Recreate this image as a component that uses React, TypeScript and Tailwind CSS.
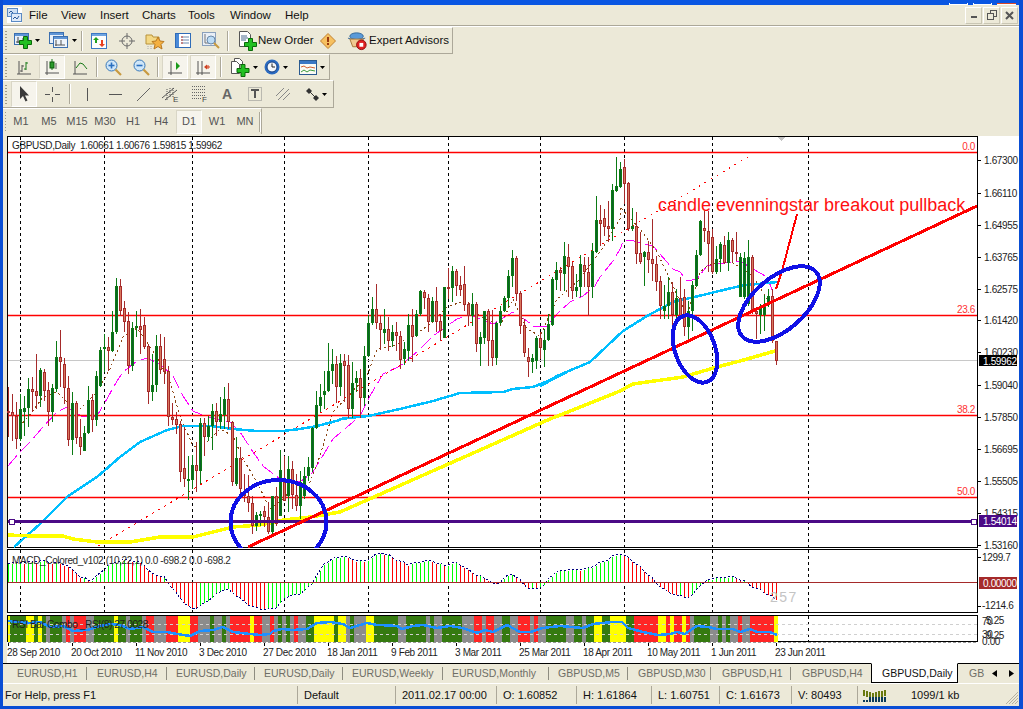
import React from "react";

type P = [number, number];
const z = (ox: number, oy: number, pts: number[][]): P[] => pts.map(([u, v]) => [ox + u / 3, oy + v / 3]);
const pl = (p: P[]) => p.map(([x, y]) => `${Math.round(x)},${Math.round(y)}`).join(" ");
const at = (p: P[], x: number) => {
  if (x <= p[0][0]) return p[0][1];
  for (let i = 1; i < p.length; i++) if (x <= p[i][0]) {
    const t = (x - p[i - 1][0]) / (p[i][0] - p[i - 1][0] || 1);
    return p[i - 1][1] + t * (p[i][1] - p[i - 1][1]);
  }
  return p[p.length - 1][1];
};

// kind(1 bull,0 bear), body top, body bottom, high, low  (in zoomed coordinates of each block)
const A = [[0,425,432,355,500],[0,430,442,375,515],[0,440,510,400,540],[1,420,510,375,515],[1,417,430,380,500],[1,360,418,327,475],[0,361,368,325,430],[0,367,380,255,420],[1,303,380,297,415],[0,310,365,300,395],[0,363,430,340,472],[1,358,430,345,460],[1,265,360,215,370],[0,265,280,183,355],[0,285,358,268,405],[0,358,512,320,530],[1,403,512,370,558],[0,403,507,395,525],[0,505,535,450,558],[1,493,545,470,545],[1,393,493,352,495],[0,393,452,375,490],[1,322,452,305,470],[1,243,350,235,355],[1,235,238,195,310],[0,235,245,205,305],[1,190,245,125,250],[1,52,190,28,195],[0,52,125,30,140],[0,118,158,97,190],[0,157,290,130,315],[1,178,290,158,305],[1,172,178,127,205],[0,172,182,120,255],[0,168,233,145,240],[0,232,370,225,405],[1,347,370,255,395],[1,232,347,198,370],[0,232,302,195,315],[0,270,308,203,345],[0,305,445,290,470],[0,445,452,402,468],[0,450,468,430,495],[0,465,610,455,640],[0,598,630,475,655],[1,630,632,560,692],[1,588,632,558,660],[0,588,605,520,670],[1,463,605,447,645],[0,462,503,447,560],[1,472,503,440,515],[1,427,472,405,542],[0,427,458,402,500],[1,436,458,383,480],[1,390,437,355,480],[0,390,460,343,480],[0,460,640,455,650],[1,568,645,505,650],[0,568,660,535,690],[0,667,682,615,700],[0,680,703,618,730],[0,703,770,680,795],[1,738,770,730,785],[1,735,740,725,770],[0,727,745,710,775],[0,745,790,700,795],[1,682,790,680,800],[0,682,765,655,770],[1,603,740,543,740],[0,640,695,560,695],[1,600,680,562,730],[0,600,678,575,720],[0,677,712,615,725],[1,640,712,605,750],[1,620,680,595,690],[1,595,620,565,635],[1,478,598,475,610],[1,408,478,367,480]];
const B = [[1,535,560,495,580],[1,515,527,457,570],[1,455,515,373,520],[1,435,455,390,495],[0,435,503,410,553],[1,433,503,405,530],[0,427,440,405,550],[0,438,570,408,598],[1,493,570,430,598],[1,477,493,455,520],[0,477,537,450,598],[1,412,537,380,560],[1,312,412,287,415],[1,270,312,235,317],[0,270,313,195,330],[0,313,332,290,392],[1,330,343,270,375],[0,330,367,293,395],[1,340,365,318,385],[0,340,350,308,395],[0,352,422,335,450],[1,390,420,368,437],[1,318,395,285,425],[0,318,355,270,430],[1,285,352,273,355],[1,215,285,212,290],[0,218,238,212,270],[0,237,308,225,340],[1,247,308,235,310],[0,247,310,205,340],[0,305,335,285,365],[1,205,358,205,358],[0,205,210,148,240],[1,155,208,140,248],[0,155,200,150,232],[0,198,212,170,232],[0,195,258,142,275],[0,255,290,248,320],[1,255,290,222,320],[0,255,375,248,400],[1,355,375,340,440],[1,277,358,275,375],[0,277,365,270,440],[0,363,417,273,440],[1,312,417,310,438],[1,277,312,262,318],[1,237,277,230,280],[1,172,237,153,265],[1,118,172,93,205],[0,118,225,112,245],[0,223,320,215,345],[0,318,402,300,415],[0,415,430,388,475],[1,417,430,405,463],[1,357,425,352,450],[0,357,388,340,420],[1,362,392,330,445],[1,315,362,285,365],[1,180,318,175,320],[1,153,183,128,212],[0,153,163,143,215],[1,112,165,70,215],[0,113,143,75,235],[0,140,215,130,240],[1,205,215,165,235],[1,135,205,107,235],[0,138,158,115,205],[0,158,203,115,290],[1,162,203,142,237]];
const C = [[1,307,375,283,380],[1,213,310,140,312],[0,213,225,168,290],[0,207,235,180,262],[0,230,240,155,278],[1,123,240,105,275],[1,112,127,25,130],[1,60,113,40,118],[0,55,105,30,165],[0,103,240,100,245],[1,232,240,178,245],[0,232,315,190,345],[0,312,340,250,345],[1,310,325,305,410],[0,310,332,275,372],[0,330,345,210,395],[0,345,398,320,425],[0,397,472,380,510],[1,472,487,408,510],[1,430,470,385,510],[0,430,498,400,550],[1,448,498,420,525],[0,448,505,385,505],[0,443,535,420,560],[1,485,535,455,582],[1,408,485,395,545],[1,317,410,302,415],[1,215,318,213,320],[0,238,247,185,280]];
const D = [[0,290,330,232,415],[0,310,415,285,420],[1,375,415,335,420],[1,330,375,325,415],[0,333,388,305,390],[1,318,388,295,410],[0,318,355,312,385],[0,355,358,295,380],[1,370,490,358,490],[1,372,490,355,495],[1,370,510,318,515],[0,370,532,363,540],[0,530,540,520,615],[1,517,543,510,600],[1,510,543,482,590],[1,485,510,465,520],[0,485,620,465,628],[0,622,680,622,692]];

const candles: { x: number; k: number; t: number; b: number; h: number; l: number }[] = [];
const add = (rows: number[][], start: number, base: number) => rows.forEach((r, i) => candles.push({
  x: start + 4 * i, k: r[0], t: Math.round(base + r[1] / 3), b: Math.round(base + r[2] / 3), h: Math.round(base + r[3] / 3), l: Math.round(base + r[4] / 3),
}));
add(A, 8, 270); add(B, 320, 220); add(C, 592, 150); add(D, 708, 135);

const cyan: P[] = [[14, 548], ...z(0, 270, [[120,765],[200,685],[290,625],[360,565],[420,520],[500,483],[550,470],[630,470],[700,480],[770,485],[850,485],[900,480],[950,470],[1020,452]]), ...z(300, 220, [[120,600],[205,590],[300,570],[400,545],[480,522],[610,520],[640,510],[700,505],[760,480],[800,460]]), ...z(540, 150, [[0,710],[50,680],[150,640],[200,590],[250,545],[320,500],[400,460],[500,435],[600,410]]), ...z(600, 135, [[440,452],[533,445]])];
const yellow: P[] = [...z(0, 270, [[24,797],[100,800],[190,800],[220,810],[290,820],[390,818],[480,805],[580,803],[640,790],[700,775],[780,768],[850,752],[930,745],[1020,730]]), ...z(300, 220, [[750,600],[850,560],[960,515]]), ...z(600, 135, [[100,750],[250,730],[350,700],[420,680],[525,652]])];
const magenta: P[] = [...z(0, 270, [[24,590],[60,550],[90,520],[130,475],[170,430],[200,415],[250,445],[290,440],[325,385],[350,335],[370,310],[410,275],[440,268],[480,285],[520,320],[550,380],[580,425],[620,445],[690,460],[720,490],[760,550],[790,590],[840,630],[900,640],[940,610],[1000,510]]), ...z(300, 220, [[180,590],[210,530],[250,465],[300,440],[355,395],[400,350],[440,320],[470,300],[510,288],[580,315],[640,278],[680,305],[700,322],[740,322],[770,285],[810,250],[850,230],[885,200],[900,175],[940,125],[960,90]]), ...z(540, 150, [[250,278],[270,272],[340,290],[400,360],[420,370],[440,395],[470,390],[500,350],[530,345],[600,335],[640,360],[680,385],[700,430],[708,420]])];
const brown: P[] = [...z(0, 270, [[24,505],[60,470],[95,430],[130,385],[170,370],[230,430],[290,370],[330,300],[370,205],[410,178],[470,265],[510,340],[540,440],[580,530],[610,530],[660,480],[700,500],[730,570],[770,640],[810,720],[850,690],[890,640],[930,640],[960,560],[1000,430]]), ...z(300, 220, [[200,470],[230,390],[280,380],[340,350],[400,310],[445,260],[500,245],[540,290],[600,320],[640,240],[680,330],[720,350],[770,240],[830,190],[900,100],[960,0]]), ...z(540, 150, [[240,175],[300,240],[350,310],[400,410],[440,500],[480,370],[500,350],[560,330],[640,380],[700,480]])];

const macdP: P[] = [...z(0, 480, [[24,255],[130,248],[200,260],[240,295],[265,305],[280,305],[290,295],[320,265],[350,250],[380,245],[430,255],[450,285],[490,295],[510,315],[540,355],[570,385],[590,385],[620,365],[660,335],[680,325],[700,340],[740,370],[770,385],[800,390],[830,380],[860,350],[900,340],[930,320],[950,290],[980,250],[1030,232],[1060,245],[1090,250]]), ...z(380, 550, [[0,15],[20,18],[60,40],[85,48],[130,38],[160,40],[190,52],[230,43],[250,55],[290,80],[330,97],[350,103],[370,92],[395,75],[420,95],[440,110],[470,120],[500,100],[530,70],[570,63],[610,65],[660,45],[720,15],[760,40],[800,75],[830,100],[860,125],[900,138],[930,145],[960,105],[990,90],[1050,85],[1100,100],[1150,125],[1190,150]])];
const macd = Array.from({ length: 193 }, (_, i) => {
  const x = 8 + 4 * i;
  return { x, y: Math.round(at(macdP, x) + Math.sin(i * 1.9) * 0.7) };
});

const rsi: P[] = [...z(0, 480, [[24,425],[60,430],[90,432],[120,430],[150,445],[190,440],[220,455],[260,453],[300,440],[330,435],[360,438],[390,450],[430,445],[460,458],[500,460],[530,465],[570,470],[600,455],[640,452],[670,445],[700,460],[750,465],[780,468],[810,465],[820,455],[845,450],[880,452],[920,450],[950,432],[990,428],[1030,435],[1050,448],[1100,433],[1130,437]]), ...z(380, 550, [[0,228],[50,232],[65,240],[100,230],[130,228],[170,238],[210,230],[250,238],[290,252],[315,242],[340,250],[380,228],[420,248],[450,250],[490,238],[540,230],[610,238],[640,225],[700,218],[725,218],[745,238],[790,248],[835,258],[870,255],[890,248],[915,255],[950,230],[985,235],[1010,240],[1060,240],[1080,248],[1110,240],[1130,250],[1170,248],[1190,258]])];

const G = "#357a10", Y = "#ffff00", R = "#ff2626", S = "#8c8c8c";
const bandsA: [number, number, string][] = [[24,30,Y],[30,78,G],[78,102,Y],[102,114,G],[114,126,Y],[126,138,G],[138,150,S],[150,186,G],[186,198,S],[198,210,R],[210,222,S],[222,258,R],[258,282,S],[282,342,G],[342,354,Y],[354,378,G],[378,390,S],[390,426,G],[426,438,S],[438,462,R],[462,498,S],[498,534,R],[534,570,Y],[570,594,R],[594,630,S],[630,642,G],[642,666,S],[666,678,G],[678,690,S],[690,750,R],[750,762,Y],[762,786,R],[786,810,S],[810,822,R],[822,834,S],[834,846,G],[846,858,S],[858,870,G],[870,882,S],[882,894,R],[894,918,S],[918,942,G],[942,1002,Y],[1002,1014,G],[1014,1038,Y],[1038,1050,S],[1050,1062,G],[1062,1098,S],[1098,1122,Y],[1122,1140,G]];
const bandsB: [number, number, string][] = [[0,54,G],[54,78,S],[78,138,G],[138,150,S],[150,162,G],[162,186,S],[186,246,G],[246,282,S],[282,306,R],[306,318,S],[318,342,R],[342,366,S],[366,390,G],[390,414,S],[414,450,R],[450,462,S],[462,474,R],[474,498,S],[498,558,G],[558,582,S],[582,606,G],[606,618,S],[618,642,G],[642,666,Y],[666,690,G],[690,738,Y],[738,762,G],[762,834,R],[834,858,Y],[858,870,R],[870,882,Y],[882,906,R],[906,918,Y],[918,930,R],[930,942,S],[942,990,G],[990,1014,S],[1014,1026,G],[1026,1038,S],[1038,1050,G],[1050,1074,S],[1074,1086,R],[1086,1110,S],[1110,1182,R],[1182,1194,Y]];

const grid = [20, 104, 192, 284, 368, 448, 540, 624, 712, 808];
const axis: [string, number][] = [["1.67300",161],["1.66110",194],["1.64955",226],["1.63765",258],["1.62575",290],["1.61420",321],["1.60230",353],["1.59040",386],["1.57850",418],["1.56695",450],["1.55505",482],["1.54315",514],["1.53160",546]];
const fibs: [string, number][] = [["0.0",153],["23.6",316],["38.2",416],["50.0",498]];
const dates: [string, number][] = [["28 Sep 2010",7],["20 Oct 2010",71],["11 Nov 2010",135],["3 Dec 2010",199],["27 Dec 2010",263],["18 Jan 2011",327],["9 Feb 2011",391],["3 Mar 2011",455],["25 Mar 2011",519],["18 Apr 2011",583],["10 May 2011",647],["1 Jun 2011",711],["23 Jun 2011",775]];
const TXT = "#1c1c1c";
const CH = "text-[10px] tracking-[-0.35px]";

function Grid({ y1, y2 }: { y1: number; y2: number }) {
  return <>{grid.map((x) => <line key={x} x1={x + 0.5} x2={x + 0.5} y1={y1} y2={y2} stroke="#000" strokeDasharray="3 3" />)}</>;
}

function MainPane() {
  return (
    <svg viewBox="7 137 1012 412" width={1012} height={412} className="block overflow-visible relative z-10" shapeRendering="crispEdges">
      <defs><clipPath id="paneClip"><rect x="7" y="137" width="971" height="412" /></clipPath></defs>
      <rect x="7.5" y="137.5" width="970" height="411" fill="#fff" stroke="#000" />
      <Grid y1={138} y2={548} />
      <line x1="8" x2="977" y1="361.5" y2="361.5" stroke="#c8c8c8" />
      <polyline points={pl(magenta)} fill="none" stroke="#ff00ff" strokeDasharray="14 5" />
      <polyline points={pl(brown)} fill="none" stroke="#8b4513" strokeDasharray="2 3" />
      <line x1="98" y1="547" x2="753" y2="155" stroke="#ff0000" strokeDasharray="2 5" />
      {fibs.map(([t, y]) => <line key={t} x1="8" x2="977" y1={y + 0.5} y2={y + 0.5} stroke="#ff0000" strokeWidth="1.4" shapeRendering="auto" />)}
      <polyline points={pl(cyan)} fill="none" stroke="#00bfff" strokeWidth="2.5" />
      <polyline points={pl(yellow)} fill="none" stroke="#ffff00" strokeWidth="3.5" />
      {candles.map((c) => {
        const line = c.k ? "#0b7a14" : "#a52a2a";
        const fill = c.k ? "#0a6128" : "#d9785f";
        return (
          <g key={c.x}>
            <rect x={c.x} y={c.h} width="1" height={Math.max(c.l - c.h, 1)} fill={line} />
            <rect x={c.x - 1} y={c.t} width="3" height={Math.max(c.b - c.t, 2)} fill={line} />
            {c.b - c.t > 2 && <rect x={c.x} y={c.t + 1} width="1" height={c.b - c.t - 2} fill={fill} />}
          </g>
        );
      })}
      <rect x="8" y="521" width="969" height="3" fill="#4b0a86" />
      <rect x="9" y="520" width="5" height="5" fill="#fff" stroke="#4b0a86" />
      <rect x="971" y="520" width="5" height="5" fill="#fff" stroke="#4b0a86" />
      <g clipPath="url(#paneClip)">
        <line x1="248" y1="548" x2="977" y2="207" stroke="#ff0000" strokeWidth="3" />
        <polyline points="776,290 782,272 797,215" fill="none" stroke="#ff0000" strokeWidth="2" />
        <ellipse cx="278.5" cy="523" rx="48" ry="42" fill="none" stroke="#1010e6" strokeWidth="4" />
        <ellipse cx="695" cy="350" rx="20" ry="35" transform="rotate(-20 695 350)" fill="none" stroke="#1010e6" strokeWidth="4" />
        <ellipse cx="779" cy="305" rx="49" ry="26" transform="rotate(-41 779 305)" fill="none" stroke="#1010e6" strokeWidth="4" />
      </g>
      <polygon points="778,138 785,138 781.5,142" fill="#c4c4c4" />
      {fibs.map(([t, y]) => <text key={t} x="975" y={y - 2} textAnchor="end" fill="#ff3030" className={CH}>{t}</text>)}
      <text x="12" y="150" fill={TXT} className={CH} xmlSpace="preserve">GBPUSD,Daily  1.60661 1.60676 1.59815 1.59962</text>
      <text x="658" y="212" fill="#ff1010" className="text-[18px]">candle evenningstar breakout pullback</text>
      {axis.map(([t, y]) => (
        <g key={t}>
          <line x1="977" x2="981" y1={y + 0.5} y2={y + 0.5} stroke="#000" />
          <text x="984" y={y + 4} fill={TXT} className={CH}>{t}</text>
        </g>
      ))}
      <rect x="979" y="356" width="38" height="11" fill="#000" />
      <text x="983" y="365.5" fill="#fff" className={CH}>1.59962</text>
      <rect x="979" y="516" width="38" height="12" fill="#4b0a86" />
      <text x="983" y="526" fill="#fff" className={CH}>1.54014</text>
    </svg>
  );
}

function MacdPane() {
  const tops = macd.map((b): P => [b.x, b.y + (b.y < 583 ? -1 : 1)]);
  return (
    <svg viewBox="7 549 1012 66" width={1012} height={66} className="block" shapeRendering="crispEdges">
      <rect x="7.5" y="550.5" width="970" height="63" fill="#fff" stroke="#000" />
      <Grid y1={551} y2={613} />
      {macd.map((b, i) => {
        const prev = i ? macd[i - 1].y : b.y + 1;
        const up = b.y <= prev;
        return <rect key={b.x} x={b.x} y={Math.min(b.y, 583)} width="1" height={Math.abs(b.y - 583) + 1} fill={up ? "#00ff00" : "#ff0000"} />;
      })}
      <polyline points={pl(tops)} fill="none" stroke="#000080" strokeDasharray="2 2" />
      <line x1="8" x2="977" y1="583.5" y2="583.5" stroke="#a52a2a" />
      <text x="12" y="565" fill="#2a2a2a" className={CH}>MACD_Colored_v102 (10,22,1) 0.0 -698.2 0.0 -698.2</text>
      <text x="770" y="603" fill="#c4c4c4" letterSpacing="1.5" className="text-[14px]">257</text>
      <line x1="977" x2="981" y1="558.5" y2="558.5" stroke="#000" />
      <text x="982" y="562" fill={TXT} className={CH}>1299.7</text>
      <text x="982" y="610" fill={TXT} className={CH}>-1214.6</text>
      <line x1="977" x2="981" y1="607.5" y2="607.5" stroke="#000" />
      <rect x="979" y="578" width="38" height="12" fill="#a52a2a" />
      <text x="983" y="587.5" fill="#fff" className={CH}>0.00000</text>
    </svg>
  );
}

function RsiPane() {
  const seg = (a: [number, number, string][], ox: number) => a.map(([u, v, c]) => (
    <rect key={`${ox}-${u}`} x={ox + u / 3} y="617" width={(v - u) / 3} height="26" fill={c} />
  ));
  return (
    <svg viewBox="7 615 1012 29" width={1012} height={29} className="block overflow-visible relative z-10" shapeRendering="crispEdges">
      <rect x="7.5" y="616.5" width="970" height="26" fill="#fff" stroke="#000" />
      <Grid y1={617} y2={642} />
      {seg(bandsA, 0)}
      {seg(bandsB, 380)}
      <line x1="8" x2="977" y1="625.5" y2="625.5" stroke="#cfcfcf" strokeDasharray="3 3" />
      <line x1="8" x2="977" y1="635.5" y2="635.5" stroke="#cfcfcf" strokeDasharray="3 3" />
      <line x1="8" x2="977" y1="643.5" y2="643.5" stroke="#9a9a9a" strokeDasharray="3 2" />
      <polyline points={pl(rsi)} fill="none" stroke="#1e90ff" strokeWidth="2.5" />
      <text x="12" y="629" fill="#1e1e1e" className={CH}>RSI Bar Combo _RSI(8) 27.0028</text>
      <text x="982" y="626" fill={TXT} className={CH}>70</text>
      <text x="986" y="625" fill={TXT} className={CH}>5.25</text>
      <text x="982" y="639" fill={TXT} className={CH}>30</text>
      <text x="986" y="640" fill={TXT} className={CH}>9.25</text>
      <text x="982" y="646" fill={TXT} className={CH}>0.00</text>
    </svg>
  );
}

function DateAxis() {
  return (
    <svg viewBox="7 644 1012 20" width={1012} height={20} className="block" shapeRendering="crispEdges">
      {dates.map(([t, x]) => (
        <g key={t}>
          <line x1={x + 1.5} x2={x + 1.5} y1="644" y2="647" stroke="#000" />
          <text x={x} y="657" fill={TXT} className={CH}>{t}</text>
        </g>
      ))}
    </svg>
  );
}

/* ---------- toolbar icons ---------- */
const Caret = () => <svg width="5" height="3" viewBox="0 0 5 3" className="ml-[3px]"><polygon points="0,0 5,0 2.5,3" fill="#000" /></svg>;
const Plus = ({ x, y }: { x: number; y: number }) => (
  <path transform={`translate(${x} ${y})`} d="M4 0h4v4h4v4H8v4H4V8H0V4h4z" fill="#22c022" stroke="#0a6a0a" strokeWidth="1" />
);
const IconNewChart = () => (
  <svg width="18" height="16" viewBox="0 0 18 16"><rect x=".5" y=".5" width="14" height="11" fill="#e8f0fa" stroke="#3b6fb0" /><rect x="1" y="1" width="13" height="2" fill="#5f95d6" /><path d="M4 4v6m-2-1h9M9 5v5" stroke="#444" fill="none" /><Plus x={5.5} y={3.5} /></svg>
);
const IconProfiles = () => (
  <svg width="20" height="17" viewBox="0 0 20 17"><rect x=".5" y=".5" width="14" height="11" fill="#e8f0fa" stroke="#3b6fb0" /><rect x="1" y="1" width="13" height="2" fill="#5f95d6" /><rect x="4.5" y="4.5" width="14" height="11" fill="#eef4fb" stroke="#3b6fb0" /><rect x="5" y="5" width="13" height="2" fill="#5f95d6" /><path d="M7 8v6m-1-1h10m-4-5v5" stroke="#555" fill="none" /></svg>
);
const IconMarket = () => (
  <svg width="16" height="16" viewBox="0 0 16 16"><rect x=".5" y=".5" width="15" height="15" fill="#fdfdfd" stroke="#3b78c4" /><rect x="1" y="1" width="14" height="2" fill="#6fa4e0" /><path d="M5 4l3 3H6v3H4V7H2z" fill="#1fa01f" /><path d="M11 14l-3-3h2V7h2v4h2z" fill="#e84020" /></svg>
);
const IconCross = () => (
  <svg width="16" height="16" viewBox="0 0 16 16" fill="none" stroke="#6a6a6a"><circle cx="8" cy="8" r="5" /><path d="M8 0v6M8 10v6M0 8h6M10 8h6" /></svg>
);
const IconNavigator = () => (
  <svg width="20" height="18" viewBox="0 0 20 18"><path d="M1 3h6l1 2h6v7H1z" fill="#f4d884" stroke="#b8923a" /><polygon points="13,5 15,9 19,9.5 16,12.5 17,17 13,14.5 9,17 10,12.5 7,9.5 11,9" fill="#f4b040" stroke="#b87820" /><path d="M3 14v3M6 14v3" stroke="#aaa" strokeDasharray="1 1" /></svg>
);
const IconTerminal = () => (
  <svg width="16" height="15" viewBox="0 0 16 15"><rect x=".5" y=".5" width="15" height="14" fill="#fff" stroke="#2f6cb8" /><rect x="1" y="1" width="3" height="13" fill="#4a8ad8" /><path d="M6 4h8M6 7h8M6 10h8" stroke="#6a8ab0" /><path d="M6 4h2M6 7h2M6 10h2" stroke="#d04030" /></svg>
);
const IconTester = () => (
  <svg width="18" height="18" viewBox="0 0 18 18"><rect x=".5" y=".5" width="13" height="13" fill="#e8eef6" stroke="#8aa0bc" /><path d="M3 2v9h8" stroke="#777" fill="none" /><circle cx="9" cy="8" r="4" fill="#bcdcf6" stroke="#6a88a8" /><path d="M12 11l5 5" stroke="#c89a40" strokeWidth="2" /></svg>
);
const IconOrder = () => (
  <svg width="19" height="20" viewBox="0 0 19 20"><path d="M1.5.5h8l3 3v12h-11z" fill="#fff" stroke="#555" /><path d="M3 5h6M3 7h7M3 9h5" stroke="#4a6a90" /><Plus x={6.5} y={7.5} /></svg>
);
const IconAlert = () => (
  <svg width="16" height="16" viewBox="0 0 16 16"><polygon points="8,.5 15.5,8 8,15.5 .5,8" fill="#f6c060" stroke="#c08030" /><rect x="7" y="4" width="2" height="5" fill="#9a3a10" /><rect x="7" y="10" width="2" height="2" fill="#9a3a10" /></svg>
);
const IconExpert = () => (
  <svg width="21" height="20" viewBox="0 0 21 20"><ellipse cx="10" cy="5" rx="7" ry="3.5" fill="#5a9ad8" stroke="#386a9a" /><path d="M1 7c4 2 14 2 18 0" stroke="#386a9a" fill="none" /><path d="M3 8h14l-2 8H6z" fill="#f0c890" stroke="#a87838" /><circle cx="15" cy="14" r="5" fill="#e02020" stroke="#901010" /><rect x="13" y="12" width="4" height="4" fill="#fff" /></svg>
);
const IconBars = () => (
  <svg width="16" height="15" viewBox="0 0 16 15" fill="none"><path d="M1 14h14M3 1v13" stroke="#555" /><path d="M6 12V5M4 11h2M6 6h2" stroke="#555" /><path d="M10 10V2M10 9H8M10 3h2" stroke="#1a7a1a" /></svg>
);
const IconCandles = () => (
  <svg width="16" height="17" viewBox="0 0 16 17" fill="none"><path d="M1 14h14M3 2v14" stroke="#555" /><path d="M8 0v11" stroke="#1a7a1a" /><rect x="6" y="3" width="4" height="6" fill="#2a9a2a" stroke="#0a5a0a" /><path d="M12 4v6" stroke="#555" /></svg>
);
const IconLine = () => (
  <svg width="16" height="15" viewBox="0 0 16 15" fill="none"><path d="M1 14h14M3 1v13" stroke="#555" /><path d="M4 8l4-5 3 1 4 5" stroke="#1a7a1a" /></svg>
);
const IconZoom = ({ minus }: { minus?: boolean }) => (
  <svg width="17" height="17" viewBox="0 0 17 17" fill="none"><circle cx="6.5" cy="6.5" r="5.5" fill="#cfe6f8" stroke="#3878b8" /><path d="M3.5 6.5h6" stroke="#2a70c0" strokeWidth="1.6" />{!minus && <path d="M6.5 3.5v6" stroke="#2a70c0" strokeWidth="1.6" />}<path d="M10.5 10.5l5.5 5.5" stroke="#c89a40" strokeWidth="2.2" /></svg>
);
const IconShift = () => (
  <svg width="15" height="15" viewBox="0 0 15 15" fill="none"><path d="M0 13h14M3 1v14" stroke="#555" /><polygon points="8,2 12,6 8,10" fill="#1a9a1a" /></svg>
);
const IconScroll = () => (
  <svg width="15" height="15" viewBox="0 0 15 15" fill="none"><path d="M0 13h14M2 1v14M6 1v14" stroke="#555" /><path d="M10 7h4M12 5v4" stroke="#d04020" /><polygon points="8,7 11,4.5 11,9.5" fill="#d04020" /></svg>
);
const IconIndicators = () => (
  <svg width="20" height="19" viewBox="0 0 20 19"><path d="M4.5 .5h5l3 3v3h-8z" fill="#fff" stroke="#555" /><path d="M1.5 3.5h5l3 3v9h-8z" fill="#fff" stroke="#555" /><Plus x={7} y={6.5} /></svg>
);
const IconClock = () => (
  <svg width="16" height="16" viewBox="0 0 16 16"><circle cx="8" cy="8" r="7.5" fill="#2a6ac0" /><circle cx="8" cy="8" r="5" fill="#f4f8fc" stroke="#143e80" /><path d="M8 4.5V8h3" stroke="#222" fill="none" /></svg>
);
const IconTemplate = () => (
  <svg width="18" height="15" viewBox="0 0 18 15" fill="none"><rect x=".5" y=".5" width="17" height="14" fill="#fbfbf4" stroke="#2a5a90" /><rect x="1" y="1" width="16" height="3" fill="#3a78c4" /><path d="M2 7l3-1 3 2 3-1 5 1" stroke="#d06030" /><path d="M2 12l3-2 3 2 3-2 5 1" stroke="#3a9a3a" /></svg>
);
const IconArrow = () => (
  <svg width="11" height="16" viewBox="0 0 11 16"><polygon points="1,0 1,13 4,10 6.5,15.5 8.5,14.5 6,9.5 10,9.5" fill="#3a3a3a" /></svg>
);
const IconCrosshair = () => (
  <svg width="15" height="15" viewBox="0 0 15 15" stroke="#555" fill="none"><path d="M7.5 0v5M7.5 10v5M0 7.5h5M10 7.5h5" /></svg>
);
const IconV = () => <svg width="3" height="13" viewBox="0 0 3 13"><path d="M1.5 0v13" stroke="#555" /></svg>;
const IconH = () => <svg width="13" height="3" viewBox="0 0 13 3"><path d="M0 1.5h13" stroke="#555" /></svg>;
const IconT = () => <svg width="13" height="13" viewBox="0 0 13 13"><path d="M0 13L13 0" stroke="#666" fill="none" /></svg>;
const IconE = () => (
  <svg width="18" height="16" viewBox="0 0 18 16" fill="none" stroke="#555"><path d="M0 12L12 2M3 14L15 4" /><path d="M5 3v11M8 2v10M11 2v9" strokeDasharray="1 1" /><text x="11" y="15.5" stroke="none" fill="#444" className="text-[8px]">E</text></svg>
);
const IconF = () => (
  <svg width="16" height="16" viewBox="0 0 16 16" fill="none" stroke="#666"><path d="M1 .5h13M1 3.5h13M1 6.5h13M1 9.5h13M1 12.5h9" strokeDasharray="1 1" /><text x="11" y="15.5" stroke="none" fill="#444" className="text-[8px]">F</text></svg>
);
const IconTBox = () => (
  <svg width="14" height="14" viewBox="0 0 14 14" fill="none"><rect x=".5" y=".5" width="13" height="13" stroke="#888" strokeDasharray="1 1" /><path d="M3 3h8M7 3v8" stroke="#555" strokeWidth="2" /></svg>
);
const IconLines = () => (
  <svg width="14" height="13" viewBox="0 0 14 13" fill="none" stroke="#888"><path d="M0 8L8 0M2 12L13 1M7 12L14 5" /></svg>
);
const IconArrows = () => (
  <svg width="13" height="13" viewBox="0 0 13 13" fill="#333"><polygon points="3,0 6,3 3,6 0,3" /><polygon points="10,7 13,10 10,13 7,10" /><path d="M3 3l7 7" stroke="#333" /></svg>
);

const Grip = () => <div className="ml-[2px] w-[2px] h-[19px] bg-[repeating-linear-gradient(#a09c88_0_1px,transparent_1px_3px)]" />;
const Sep = ({ c }: { c: string }) => <div className={`flex justify-center ${c}`}><div className="w-[1px] h-[20px] bg-[#aca899] border-r border-white box-content" /></div>;
const Cell = ({ c, pressed, children }: { c: string; pressed?: boolean; children?: React.ReactNode }) => (
  <div className={`flex items-center shrink-0 ${c}`}>
    {pressed ? <div className="flex items-center justify-center w-full h-full bg-[#f6f4ec] border border-[#d9d6c6] border-b-white border-r-white">{children}</div> : children}
  </div>
);

function Toolbars() {
  const rowCls = "flex items-center border-r border-b border-[#aca899] border-t border-t-white bg-[#ece9d8]";
  const btn = "w-[28px] h-[24px] justify-center";
  return (
    <div className="flex flex-col text-[11px] text-[#111]">
      <div className={`${rowCls} w-[450px] h-[27px] text-[11.5px]`}>
        <Grip />
        <Cell c="w-[37px] pl-[7px]"><IconNewChart /><Caret /></Cell>
        <Cell c="w-[34px] pl-[5px]"><IconProfiles /><Caret /></Cell>
        <Sep c="w-[7px]" />
        <Cell c={btn}><IconMarket /></Cell>
        <Cell c={btn}><IconCross /></Cell>
        <Cell c={btn}><IconNavigator /></Cell>
        <Cell c={btn}><IconTerminal /></Cell>
        <Cell c={btn}><IconTester /></Cell>
        <Sep c="w-[6px]" />
        <Cell c="w-[84px] pl-[7px] gap-[1px] whitespace-nowrap"><IconOrder /><span>New Order</span></Cell>
        <Cell c="w-[26px] justify-center"><IconAlert /></Cell>
        <Cell c="w-[108px] pl-[6px] gap-[2px] whitespace-nowrap"><IconExpert /><span>Expert Advisors</span></Cell>
      </div>
      <div className={`${rowCls} w-[327px] h-[26px]`}>
        <Grip />
        <div className="w-[3px]" />
        <Cell c={btn}><IconBars /></Cell>
        <Cell c="w-[28px] h-[24px] px-[1px]" pressed><IconCandles /></Cell>
        <Cell c={btn}><IconLine /></Cell>
        <Sep c="w-[5px]" />
        <Cell c={btn}><IconZoom /></Cell>
        <Cell c={btn}><IconZoom minus /></Cell>
        <Sep c="w-[6px]" />
        <Cell c="w-[28px] h-[24px] px-[1px]" pressed><IconShift /></Cell>
        <Cell c="w-[28px] h-[24px] px-[1px]" pressed><IconScroll /></Cell>
        <Sep c="w-[8px]" />
        <Cell c="w-[33px] pl-[5px]"><IconIndicators /><Caret /></Cell>
        <Cell c="w-[34px] pl-[6px]"><IconClock /><Caret /></Cell>
        <Cell c="w-[34px] pl-[7px]"><IconTemplate /><Caret /></Cell>
      </div>
      <div className={`${rowCls} w-[331px] h-[28px]`}>
        <Grip />
        <div className="w-[3px]" />
        <Cell c="w-[28px] h-[26px] px-[1px]" pressed><IconArrow /></Cell>
        <Cell c={btn}><IconCrosshair /></Cell>
        <Sep c="w-[7px]" />
        <Cell c={btn}><IconV /></Cell>
        <Cell c={btn}><IconH /></Cell>
        <Cell c={btn}><IconT /></Cell>
        <Cell c={btn}><IconE /></Cell>
        <Cell c={btn}><IconF /></Cell>
        <Cell c={btn}><span className="text-[14px] font-bold text-[#666]">A</span></Cell>
        <Cell c={btn}><IconTBox /></Cell>
        <Cell c={btn}><IconLines /></Cell>
        <Cell c="w-[34px] pl-[9px]"><IconArrows /><Caret /></Cell>
      </div>
      <div className={`${rowCls} w-[259px] h-[26px] border-b-0 text-[#555]`}>
        <Grip />
        <div className="w-[2px]" />
        {["M1", "M5", "M15", "M30", "H1", "H4"].map((t) => <Cell key={t} c={btn}>{t}</Cell>)}
        <Cell c="w-[28px] h-[24px] px-[1px]" pressed>D1</Cell>
        {["W1", "MN"].map((t) => <Cell key={t} c={btn}>{t}</Cell>)}
        <Sep c="w-[2px]" />
      </div>
    </div>
  );
}

function MenuBar() {
  const items: [string, string][] = [["File", "w-[32px]"], ["View", "w-[39px]"], ["Insert", "w-[42px]"], ["Charts", "w-[46px]"], ["Tools", "w-[42px]"], ["Window", "w-[55px]"], ["Help", "w-[40px]"]];
  return (
    <div className="flex items-center h-[20px] text-[11.5px] text-[#111] border-b border-[#aca899] box-content">
      <div className="ml-[4px] mr-[7px] w-[15px] h-[16px] flex items-center justify-center bg-white">
        <svg width="15" height="15" viewBox="0 0 15 15"><rect x=".5" y=".5" width="10" height="8" fill="#cfe0f4" stroke="#5a8ac4" /><rect x="4.5" y="5.5" width="10" height="8" fill="#dfeaf8" stroke="#5a8ac4" /><path d="M6 11l2-2 2 2 2-3" stroke="#2a5a9a" fill="none" /><path d="M2 5l2-2 2 2" stroke="#2a5a9a" fill="none" /></svg>
      </div>
      {items.map(([t, w]) => <span key={t} className={`${w} pt-[2px]`}>{t}</span>)}
      <div className="ml-auto flex gap-[1px] mr-[1px]">
        {[0, 1, 2].map((i) => (
          <div key={i} className="w-[17px] h-[17px] flex items-center justify-center bg-[#ece9d8] border-r border-b border-[#c9c6b4] border-t border-l border-t-white border-l-white">
            {i === 0 && <svg width="8" height="8" viewBox="0 0 8 8"><rect x="1" y="5" width="6" height="2" fill="#555" /></svg>}
            {i === 1 && <svg width="10" height="10" viewBox="0 0 10 10" fill="none" stroke="#555"><rect x="3.5" y=".5" width="6" height="6" /><rect x=".5" y="3.5" width="6" height="6" fill="#ece9d8" /></svg>}
            {i === 2 && <svg width="9" height="9" viewBox="0 0 9 9" stroke="#555" strokeWidth="2"><path d="M1 1l7 7M8 1L1 8" /></svg>}
          </div>
        ))}
      </div>
    </div>
  );
}

function Tabs() {
  const tabs: [string, string][] = [
    ["EURUSD,H1", "w-[84px] pl-[14px]"], ["EURUSD,H4", "w-[80px] pl-[10px]"], ["EURUSD,Daily", "w-[88px] pl-[9px]"], ["EURUSD,Daily", "w-[88px] pl-[9px]"],
    ["EURUSD,Weekly", "w-[100px] pl-[9px]"], ["EURUSD,Monthly", "w-[106px] pl-[9px]"], ["GBPUSD,M5", "w-[79px] pl-[9px]"], ["GBPUSD,M30", "w-[83px] pl-[10px]"],
    ["GBPUSD,H1", "w-[80px] pl-[11px]"], ["GBPUSD,H4", "w-[80px] pl-[11px]"],
  ];
  return (
    <div className="flex items-stretch h-[19px] border-t border-black border-b border-b-white text-[10.5px] text-[#6e6e66] box-content">
      {tabs.map(([t, c], i) => (
        <div key={t + i} className={`flex items-center justify-between shrink-0 whitespace-nowrap ${c}`}>
          <span className="pt-[1px]">{t}</span>
          {i < 9 && <div className="w-[1px] h-[13px] bg-[#8e8c80]" />}
        </div>
      ))}
      <div className="w-[87px] shrink-0 flex items-center pl-[10px] pt-[1px] bg-white text-[#111] border-x border-b border-black -mt-[1px] border-t border-t-white">GBPUSD,Daily</div>
      <div className="pl-[11px] pt-[1px] flex items-center">GB</div>
      <div className="ml-[8px] flex items-center gap-[12px]">
        <svg width="5" height="7" viewBox="0 0 5 7"><polygon points="5,0 5,7 0,3.5" fill="#000" /></svg>
        <svg width="5" height="7" viewBox="0 0 5 7"><polygon points="0,0 0,7 5,3.5" fill="#000" /></svg>
      </div>
    </div>
  );
}

function StatusBar() {
  const cell = "flex items-center shrink-0 border-r border-[#aca899] h-[18px] pl-[6px] whitespace-nowrap";
  return (
    <div className="flex items-center h-[22px] text-[11px] text-[#111]">
      <div className={`${cell} w-[295px] !pl-[2px]`}>For Help, press F1</div>
      <div className={`${cell} w-[98px]`}>Default</div>
      <div className={`${cell} w-[101px]`}>2011.02.17 00:00</div>
      <div className={`${cell} w-[80px]`}>O: 1.60852</div>
      <div className={`${cell} w-[75px]`}>H: 1.61864</div>
      <div className={`${cell} w-[68px]`}>L: 1.60751</div>
      <div className={`${cell} w-[72px]`}>C: 1.61673</div>
      <div className={`${cell} w-[66px]`}>V: 80493</div>
      <div className="flex items-center flex-1 pl-[5px] relative">
        <svg width="24" height="13" viewBox="0 0 24 13">
          {[0,3,6,9,12,15,18,21].map((x, i) => (
            <g key={x}><rect x={x} y={[1,2,3,4,3,2,2,1][i]} width="2" height="6" fill="#6a7a10" /><rect x={x} y={i < 2 ? 11 : 8} width="2" height={i < 2 ? 2 : 5} fill="#0a3a5a" /></g>
          ))}
        </svg>
        <span className="ml-[24px]">1099/1 kb</span>
        <svg width="15" height="15" viewBox="0 0 15 15" className="absolute right-0 bottom-[-2px]" stroke="#b4b0a0"><path d="M14 2L2 14M14 5L5 14M14 8L8 14M14 11L11 14" /></svg>
      </div>
    </div>
  );
}

export default function App() {
  return (
    <div className="w-[1023px] h-[709px] overflow-hidden flex flex-col bg-[#ece9d8] border-l-[3px] border-r-[4px] border-b-[3px] border-[#0a4ed4] font-['Liberation_Sans',sans-serif]">
      <div className="h-[5px] -mx-[3px] -mr-[4px] bg-[#0a56e2] flex justify-end items-end gap-[5px] pr-[7px] shrink-0">
        <div className="w-[19px] h-[2px] border-b border-x border-white" />
        <div className="w-[19px] h-[2px] border-b border-x border-white" />
        <div className="w-[19px] h-[2px] bg-[#d8482a] border-b border-white" />
      </div>
      <MenuBar />
      <div className="h-[1px] bg-white" />
      <Toolbars />
      <div className="h-[2px] shrink-0" />
      <div className="ml-[4px] flex flex-col bg-white shrink-0">
        <MainPane />
        <MacdPane />
        <RsiPane />
        <DateAxis />
      </div>
      <Tabs />
      <StatusBar />
    </div>
  );
}
